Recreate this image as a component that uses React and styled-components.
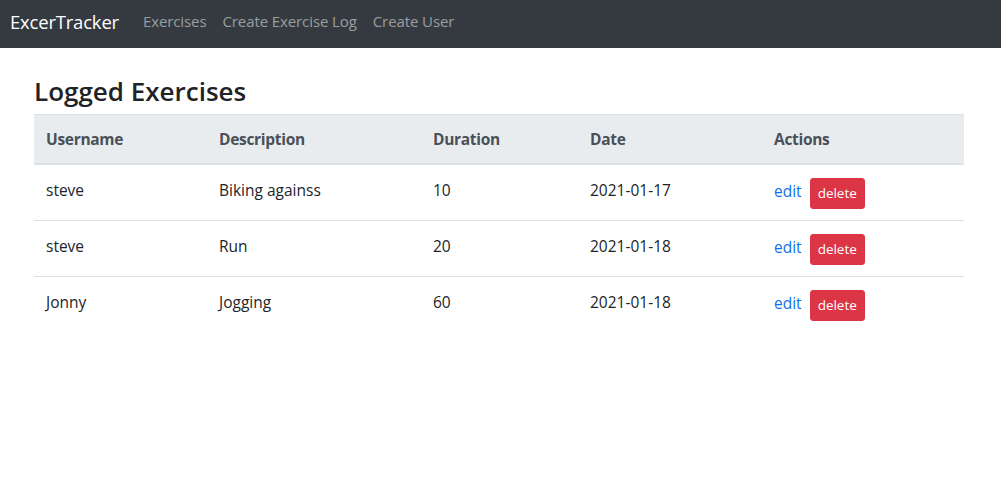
import React from "react";
import styled, { createGlobalStyle } from "styled-components";

const GlobalStyle = createGlobalStyle`
  body {
    margin: 0;
    background: #fff;
    font-family: "Open Sans", "Noto Sans", sans-serif;
    font-size: 16px;
    line-height: 1.5;
    color: #212529;
  }
`;

const Navbar = styled.nav`
  display: flex;
  align-items: center;
  height: 48px;
  padding: 0 10px 5px;
  background-color: #343a40;
  box-sizing: border-box;

  .brand {
    font-size: 18.5px;
    letter-spacing: -0.2px;
    color: #fff;
    margin-right: 24px;
  }
  a {
    color: rgba(255, 255, 255, 0.5);
    text-decoration: none;
    font-size: 15px;
    letter-spacing: -0.1px;
    margin-right: 16px;
  }
`;

const Container = styled.div`
  width: 930px;
  margin-left: 34px;
  padding-top: 26px;

  h3 {
    margin: 0 0 7px;
    padding-top: 1px;
    font-size: 26px;
    font-weight: 600;
    letter-spacing: 0;
    line-height: 32px;
    color: #1f2326;
  }
`;

const Table = styled.table`
  width: 930px;
  border-collapse: collapse;
  table-layout: fixed;

  th, td {
    text-align: left;
    vertical-align: top;
    border-top: 1px solid #dee2e6;
    font-size: 15.5px;
  }
  thead th {
    padding: 13px 12px 11px;
    background-color: #e9ecef;
    color: #495057;
    font-weight: 700;
    letter-spacing: -0.3px;
    border-bottom: 2px solid #dee2e6;
    height: 24px;
  }
  td {
    padding: 14px 12px 10px;
    height: 31px;
  }
`;

const Col = styled.col`
  width: ${(p) => p.$w}px;
`;

const EditLink = styled.a`
  color: #0d74e6;
  text-decoration: none;
  display: inline-block;
  margin-top: 1px;
`;

const DeleteButton = styled.button`
  margin-left: 8px;
  margin-top: -1px;
  background-color: #dc3545;
  border: 1px solid #dc3545;
  color: #fff;
  border-radius: 3px;
  font-family: inherit;
  font-size: 13.5px;
  line-height: 1.5;
  padding: 4px 7px;
  height: 31px;
  vertical-align: top;
`;

const columns = [
  { label: "Username", width: 173 },
  { label: "Description", width: 214 },
  { label: "Duration", width: 157 },
  { label: "Date", width: 184 },
  { label: "Actions", width: 202 },
];

const exercises = [
  { username: "steve", description: "Biking againss", duration: 10, date: "2021-01-17" },
  { username: "steve", description: "Run", duration: 20, date: "2021-01-18" },
  { username: "Jonny", description: "Jogging", duration: 60, date: "2021-01-18" },
];

const App = () => {
  return (
    <>
      <GlobalStyle />
      <Navbar>
        <span className="brand">ExcerTracker</span>
        <a href="#">Exercises</a>
        <a href="#">Create Exercise Log</a>
        <a href="#">Create User</a>
      </Navbar>
      <Container>
        <h3>Logged Exercises</h3>
        <Table>
          <colgroup>
            {columns.map((c) => (
              <Col key={c.label} $w={c.width} />
            ))}
          </colgroup>
          <thead>
            <tr>
              {columns.map((c) => (
                <th key={c.label}>{c.label}</th>
              ))}
            </tr>
          </thead>
          <tbody>
            {exercises.map((ex, i) => (
              <tr key={i}>
                <td>{ex.username}</td>
                <td>{ex.description}</td>
                <td>{ex.duration}</td>
                <td>{ex.date}</td>
                <td>
                  <EditLink href="#">edit</EditLink>
                  <DeleteButton>delete</DeleteButton>
                </td>
              </tr>
            ))}
          </tbody>
        </Table>
      </Container>
    </>
  );
};

export default App;
